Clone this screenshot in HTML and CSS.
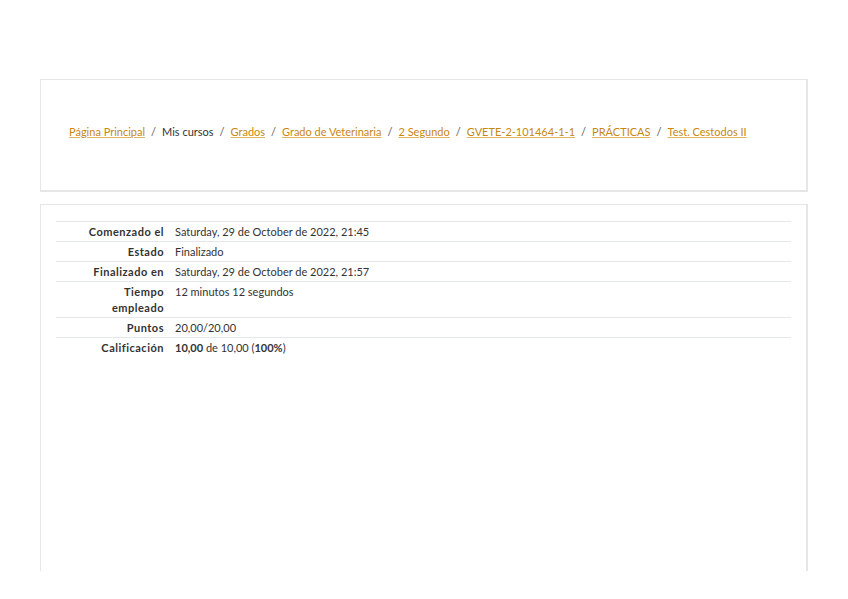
FILE: index.html
```html
<!DOCTYPE html>
<html lang="es">
<head>
    <meta charset="UTF-8">
    <meta name="viewport" content="width=device-width, initial-scale=1.0">
    <title>Test. Cestodos II: Revisión del intento</title>
    <link rel="stylesheet" href="styles.css">
</head>
<body>
    <div class="page">
        <div class="card header-card">
            <nav class="breadcrumb">
                <a href="#">Página Principal</a>
                <span class="sep">/</span>
                <span class="crumb">Mis cursos</span>
                <span class="sep">/</span>
                <a href="#">Grados</a>
                <span class="sep">/</span>
                <a href="#">Grado de Veterinaria</a>
                <span class="sep">/</span>
                <a href="#">2 Segundo</a>
                <span class="sep">/</span>
                <a href="#">GVETE-2-101464-1-1</a>
                <span class="sep">/</span>
                <a href="#">PRÁCTICAS</a>
                <span class="sep">/</span>
                <a href="#">Test. Cestodos II</a>
            </nav>
        </div>

        <div class="card main-card">
            <table class="summary">
                <tr>
                    <th>Comenzado el</th>
                    <td>Saturday, 29 de October de 2022, 21:45</td>
                </tr>
                <tr>
                    <th>Estado</th>
                    <td>Finalizado</td>
                </tr>
                <tr>
                    <th>Finalizado en</th>
                    <td>Saturday, 29 de October de 2022, 21:57</td>
                </tr>
                <tr>
                    <th>Tiempo empleado</th>
                    <td>12 minutos 12 segundos</td>
                </tr>
                <tr>
                    <th>Puntos</th>
                    <td>20,00/20,00</td>
                </tr>
                <tr>
                    <th>Calificación</th>
                    <td><b>10,00</b> de 10,00 (<b>100%</b>)</td>
                </tr>
            </table>
        </div>
    </div>
</body>
</html>
```

FILE: styles.css
```css
body {
    margin: 0;
    padding: 0;
    background-color: #fff;
    font-family: Lato, "Open Sans", sans-serif;
    font-size: 11px;
    color: #333;
}

.page {
    padding: 79px 40px 0;
    display: flex;
    flex-direction: column;
    gap: 12px;
}

.card {
    background-color: #fff;
    border: 1px solid #e6e6e6;
    border-width: 1px 2px 2px 1px;
}

.header-card {
    box-sizing: border-box;
    height: 113px;
    display: flex;
    align-items: center;
    padding: 0 28px 8px;
}

.breadcrumb {
    display: flex;
    gap: 6px;
    white-space: nowrap;
}

.breadcrumb a {
    color: #c8870f;
    text-decoration: underline;
    text-decoration-color: #dfb466;
}

.sep {
    color: #555;
}

.main-card {
    height: 350px;
    border-bottom: none;
    padding: 16px 15px 0;
}

.summary {
    width: 100%;
    border-collapse: collapse;
    border-top: 1px solid #e3e6ea;
}

.summary tr {
    border-bottom: 1px solid #e3e6ea;
}

.summary tr:last-child {
    border-bottom: none;
}

.summary th {
    width: 80px;
    padding: 2px 6px 1px 28px;
    text-align: right;
    vertical-align: top;
    font-weight: bold;
    letter-spacing: 0.5px;
    line-height: 16px;
}

.summary td {
    padding: 2px 5px 1px;
    vertical-align: top;
    line-height: 16px;
}
```
